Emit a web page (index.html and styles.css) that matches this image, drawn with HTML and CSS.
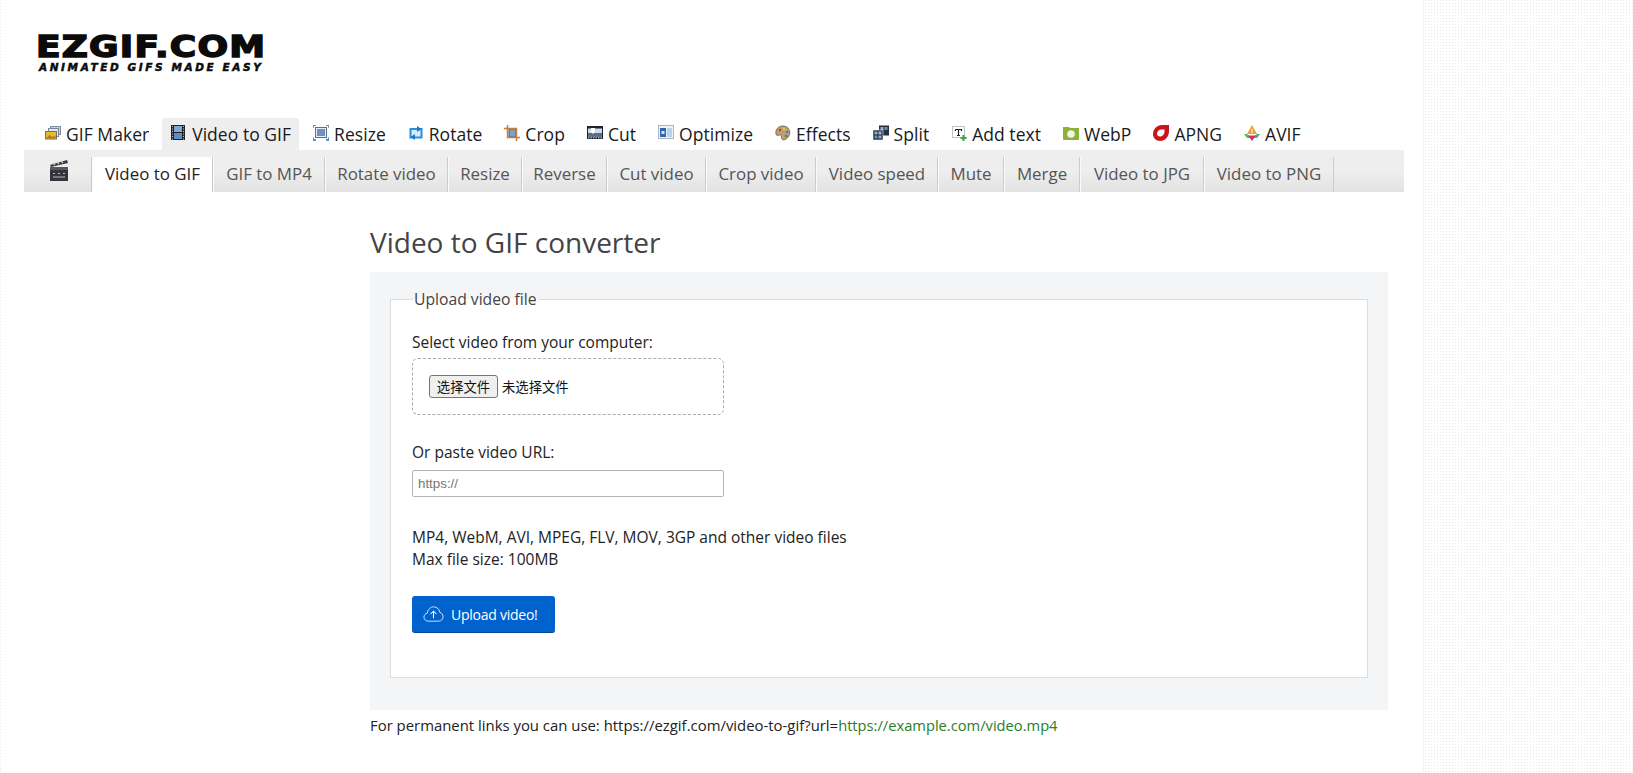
FILE: index.html
```html
<!DOCTYPE html>
<html lang="en">
<head>
<meta charset="utf-8">
<title>Video to GIF converter</title>
<link rel="stylesheet" href="styles.css">
</head>
<body>
<div class="page">
  <header class="logo">
    <div class="logo-main">EZGIF.COM</div>
    <div class="logo-tag">ANIMATED GIFS MADE EASY</div>
  </header>
  <nav class="topnav">
    <a class="top"><svg class="ic" viewBox="0 0 16 16"><rect x="5.500" y="1.500" width="10" height="8" fill="#b8d3ee" stroke="#7d8fa3"/><rect x="3.500" y="3.500" width="10" height="8" fill="#dfe9f3" stroke="#7d8791"/><rect x="0.500" y="6.500" width="11" height="7.500" fill="#e9bb34" stroke="#77735e"/><path d="M1 13l3.500-3 3 2 3-1.500V13.500H1z" fill="#b07e1c"/></svg>GIF Maker</a>
    <a class="top on"><svg class="ic" viewBox="0 0 16 16"><rect x="0" y="0" width="14" height="15" fill="#222"/><rect x="3" y="1" width="8" height="6" fill="#7da7d4"/><rect x="3" y="8" width="8" height="6" fill="#5b8ec6"/><path d="M1 1.500h1M1 4h1M1 6.500h1M1 9h1M1 11.500h1M1 14h1M12 1.500h1M12 4h1M12 6.500h1M12 9h1M12 11.500h1M12 14h1" stroke="#ccc" stroke-width="1.200"/></svg>Video to GIF</a>
    <a class="top"><svg class="ic" viewBox="0 0 16 16"><rect x="2.500" y="2.500" width="11" height="10" fill="#e8eef6" stroke="#5a6f92"/><rect x="4" y="4" width="8" height="7" fill="#6f93bd"/><path d="M0 3V0h3M13 0h3v3M16 12v3h-3M3 15H0v-3" fill="none" stroke="#2f6fd0" stroke-width="1.300"/></svg>Resize</a>
    <a class="top"><svg class="ic" viewBox="0 0 16 16"><rect x="2.500" y="4" width="11" height="8.500" fill="#d6ecfb" stroke="#2b8fd6" stroke-width="2"/><path d="M9 1l4.500 3L9 7zM7 15l-4.500-3L7 9z" fill="#1c78c4"/></svg>Rotate</a>
    <a class="top"><svg class="ic" viewBox="0 0 16 16"><rect x="5" y="4" width="7" height="8" fill="#7aa0cc" stroke="#3c5f8f"/><path d="M3.500 0v12.500H16M0 3.500h12.500V16" fill="none" stroke="#c8803a" stroke-width="1.500"/></svg>Crop</a>
    <a class="top"><svg class="ic" viewBox="0 0 16 16"><rect x="0" y="1" width="16" height="13" fill="#1e2230"/><rect x="1" y="3.500" width="14" height="8" fill="#cfdcea"/><rect x="1" y="8" width="14" height="3.500" fill="#5e6f85"/><path d="M4 3h4v3.500L6 9 4 6.500z" fill="#fff"/><path d="M1 12.800h14" stroke="#ddd" stroke-dasharray="1.500 1"/></svg>Cut</a>
    <a class="top"><svg class="ic" viewBox="0 0 16 16"><rect x="0.500" y="0.500" width="15" height="13" fill="#eef3f8" stroke="#aab6c4"/><rect x="2" y="3" width="6" height="9" fill="#2e66b0"/><rect x="9" y="3" width="5" height="9" fill="#b7d2ec"/><rect x="3.500" y="6" width="3" height="3" fill="#cfe3f5"/></svg>Optimize</a>
    <a class="top"><svg class="ic" viewBox="0 0 16 16"><path d="M8 1C4 1 0 4 1 9c.5 2 2 1.500 3 1 2-.7 2.500 1 2.500 2.500C6.500 15 9 15.500 11 14c3-2 5-6 3-9.500C13 2.500 10.500 1 8 1z" fill="#bfa273" stroke="#6b5636" stroke-width=".8"/><circle cx="5" cy="5" r="1.300" fill="#c0392b"/><circle cx="9" cy="4" r="1.300" fill="#e7c23b"/><circle cx="12" cy="7" r="1.300" fill="#3d7ab8"/><circle cx="11" cy="11" r="1.300" fill="#3d8f4a"/></svg>Effects</a>
    <a class="top"><svg class="ic" viewBox="0 0 16 16"><rect x="6" y="0.500" width="10" height="10" fill="#26303e"/><rect x="7.500" y="2" width="3" height="3" fill="#8fb0d4"/><rect x="11.500" y="2" width="3" height="3" fill="#6a90bb"/><rect x="0" y="5" width="10" height="10" fill="#1f2733" stroke="#fff" stroke-width=".6"/><rect x="1.500" y="6.500" width="3" height="3" fill="#8fb0d4"/><rect x="5.500" y="6.500" width="3" height="3" fill="#9dbadb"/><rect x="1.500" y="10.500" width="3" height="3" fill="#6a90bb"/><rect x="5.500" y="10.500" width="3" height="3" fill="#8fb0d4"/></svg>Split</a>
    <a class="top"><svg class="ic" viewBox="0 0 16 16"><rect x="1.500" y="1.500" width="12" height="11" fill="none" stroke="#7a84a8" stroke-dasharray="1 1"/><path d="M4.500 4.500h6v1.500M7.500 4.500v6M6 10.500h3M4.500 4.500V6" fill="none" stroke="#222" stroke-width="1.200"/><path d="M12.500 10v6M9.500 13h6" stroke="#3aa83a" stroke-width="2"/></svg>Add text</a>
    <a class="top"><svg class="ic" viewBox="0 0 16 16"><path d="M0 2h6l1 1h9v11a1 1 0 0 1-1 1H1a1 1 0 0 1-1-1z" fill="#8cb13c"/><circle cx="8" cy="9" r="3.800" fill="#f3f3e6"/></svg>WebP</a>
    <a class="top"><svg class="ic" viewBox="0 0 16 16"><path d="M16 0v6c0 6-4 10-9 10C3 16 0 13 0 9c0-5 4-9 9-9z" fill="#cc1518"/><path d="M11.500 4.500v2c0 2.500-2 5-4.500 5-2 0-3-1.200-3-2.800C4 6.500 6 4.500 8.500 4.500z" fill="#fff"/></svg>APNG</a>
    <a class="top"><svg class="ic" viewBox="0 0 16 16"><path d="M8 0l5 9H3z" fill="#f0a02c"/><path d="M3 9H0l3 4h5z" fill="#5fb25f"/><path d="M13 9h3l-3 4H8z" fill="#4fa86a"/><path d="M4 10.500h8L8 16z" fill="#c9336b"/><path d="M7.500 4l1-.5V8h-1z" fill="#fff"/></svg>AVIF</a>
  </nav>
  <nav class="subnav">
    <span class="sub-icon"><svg class="clap" viewBox="0 0 20 24"><path d="M1 7l17-5 1 3L2 9z" fill="#3a3a42"/><path d="M4 5l2 2M8 4l2 2M12 3l2 2" stroke="#ccc" stroke-width="1.300"/><rect x="1" y="9" width="18" height="14" fill="#33343c"/><rect x="1" y="9" width="18" height="3" fill="#55565e"/><path d="M4 15.500h2M9 15.500h2M14 15.500h2M4 19h12" stroke="#bbb"/></svg></span>
    <a class="sub active">Video to GIF</a>
    <a class="sub">GIF to MP4</a>
    <a class="sub">Rotate video</a>
    <a class="sub">Resize</a>
    <a class="sub">Reverse</a>
    <a class="sub">Cut video</a>
    <a class="sub">Crop video</a>
    <a class="sub">Video speed</a>
    <a class="sub">Mute</a>
    <a class="sub">Merge</a>
    <a class="sub">Video to JPG</a>
    <a class="sub">Video to PNG</a>
  </nav>
  <main class="main">
    <h1 class="title">Video to GIF converter</h1>
    <section class="panel">
      <fieldset class="box">
        <legend class="legend">Upload video file</legend>
        <label class="lbl">Select video from your computer:</label>
        <div class="drop">
          <button class="file-btn" type="button">选择文件</button><span class="file-none">未选择文件</span>
        </div>
        <label class="lbl lbl-url">Or paste video URL:</label>
        <input class="url" type="text" placeholder="https://">
        <p class="info">MP4, WebM, AVI, MPEG, FLV, MOV, 3GP and other video files<br>Max file size: 100MB</p>
        <button class="upload" type="button"><svg class="cloud" viewBox="0 0 22 18"><path d="M5.500 16.500C3 16.500 1 14.700 1 12.300c0-2.100 1.500-3.800 3.500-4.200C5 4.300 7.800 1.500 11.200 1.500c3.300 0 6 2.500 6.400 5.800 2 .5 3.400 2.300 3.400 4.500 0 2.600-2 4.700-4.500 4.700z" fill="none" stroke="#fff" stroke-opacity=".85"/><path d="M11 13.500V6.500M8 9l3-3 3 3" fill="none" stroke="#fff" stroke-width="1.100"/></svg>Upload video!</button>
      </fieldset>
    </section>
    <p class="perma">For permanent links you can use: https://ezgif.com/video-to-gif?url=<span class="green">https://example.com/video.mp4</span></p>
  </main>
</div>
</body>
</html>
```
FILE: styles.css
```css
* { box-sizing: border-box; }
html, body { height: 100%; }
body {
  margin: 0;
  background-color: #e9e9e9;
  background-image: linear-gradient(to right, transparent 1px, #fff 1px), linear-gradient(to bottom, transparent 1px, #fff 1px);
  background-size: 3px 3px;
  font-family: "Open Sans", "Noto Sans", sans-serif;
  color: #222;
  overflow: hidden;
}
.page {
  margin-left: 3px;
  width: 1421px;
  height: 773px;
  padding: 0 19px 0 21px;
  background: #fff;
  border-right: 1px solid #f4f4f4;
}
.logo { height: 118px; padding: 32px 0 0 12px; color: #0b0b0b; }
.logo-main {
  font: bold 30px/30px "DejaVu Sans", sans-serif;
  -webkit-text-stroke: 1.500px #0b0b0b;
  letter-spacing: 1px;
  width: 189px;
  white-space: nowrap;
  transform: scaleX(1.2);
  transform-origin: left center;
}
.logo-tag {
  font: italic bold 10.500px/12px "DejaVu Sans", sans-serif;
  -webkit-text-stroke: .5px #0b0b0b;
  letter-spacing: 2.600px;
  margin: -1px 0 0 3px;
  white-space: nowrap;
}
.topnav { display: flex; height: 32px; padding-left: 12px; gap: 5px; }
.top {
  display: flex;
  align-items: center;
  gap: 5px;
  height: 32px;
  padding: 0 8px 0 9px;
  font-size: 17.500px;
  letter-spacing: .04px;
  color: #1a1a1a;
  border-radius: 3px 3px 0 0;
  white-space: nowrap;
}
.top.on { background: #eee; }
.ic { width: 16px; height: 16px; flex: none; margin-top: -3px; }
.subnav {
  display: flex;
  height: 42px;
  padding-top: 7px;
  background: linear-gradient(#eeeeee, #eeeeee 50%, #e2e2e2);
}
.sub-icon {
  width: 68px;
  height: 35px;
  display: flex;
  justify-content: center;
  padding-left: 3px;
  border-right: 1px solid #ccc;
  flex: none;
}
.clap { width: 20px; height: 24px; margin-top: 1px; }
.sub {
  display: flex;
  align-items: center;
  justify-content: center;
  flex: none;
  height: 35px;
  padding-bottom: 2px;
  font-size: 16.900px;
  color: #555;
  border-right: 1px solid #ccc;
  border-left: 1px solid #fafafa;
  white-space: nowrap;
}
.sub:nth-child(2) { width: 121px; }
.sub:nth-child(3) { width: 112px; }
.sub:nth-child(4) { width: 123px; }
.sub:nth-child(5) { width: 74px; }
.sub:nth-child(6) { width: 85px; }
.sub:nth-child(7) { width: 99px; }
.sub:nth-child(8) { width: 110px; }
.sub:nth-child(9) { width: 122px; }
.sub:nth-child(10) { width: 66px; }
.sub:nth-child(11) { width: 76px; }
.sub:nth-child(12) { width: 124px; }
.sub:nth-child(13) { width: 130px; }
.sub.active { background: #fff; color: #222; }
.main { margin-left: 346px; width: 1018px; }
.title {
  margin: 0;
  height: 80px;
  padding-top: 30px;
  font-size: 28px;
  line-height: 40px;
  font-weight: 400;
  color: #444;
}
.panel { background: #f4f5f7; height: 438px; padding: 27px 20px 0; }
.box {
  margin: 0;
  height: 379px;
  padding: 22px 20px 0 21px;
  background: #fff;
  border: 1px solid #ddd;
  min-width: 0;
  position: relative;
}
.legend {
  padding: 0 1px;
  margin-left: 1px;
  font-size: 15.700px;
  line-height: 22px;
  color: #444;
  position: absolute;
  top: -12px;
  background: linear-gradient(#f4f5f7 11px, #fff 11px);
}
.lbl { display: block; font-size: 15.500px; line-height: 22px; color: #222; margin-top: 9px; }
.drop {
  display: flex;
  align-items: center;
  width: 312px;
  height: 57px;
  margin-top: 5px;
  padding-left: 16px;
  border: 1px dashed #aaa;
  border-radius: 6px;
}
.file-btn {
  height: 23px;
  width: 69px;
  padding: 0;
  font: 13.330px "Noto Sans CJK SC", sans-serif;
  color: #111;
  background: #efefef;
  border: 1px solid #767676;
  border-radius: 3px;
}
.file-none { margin-left: 4px; font: 13.330px "Noto Sans CJK SC", sans-serif; color: #111; }
.lbl-url { margin-top: 26px; }
.url {
  display: block;
  width: 312px;
  height: 27px;
  margin-top: 7px;
  padding: 0 5px;
  font: 13.330px "Liberation Sans", sans-serif;
  border: 1px solid #b5b5b5;
  border-radius: 2px;
}
.url::placeholder { color: #757575; }
.info { margin: 29px 0 0; font-size: 15.500px; line-height: 22px; color: #222; }
.upload {
  display: flex;
  align-items: center;
  gap: 7px;
  width: 143px;
  height: 37px;
  margin-top: 26px;
  padding: 0 0 0 11px;
  font-family: "Open Sans", sans-serif;
  font-size: 14px;
  letter-spacing: -.25px;
  color: #fff;
  background: #0062cc;
  border: 0;
  border-bottom: 1px solid #004a9e;
  border-radius: 3px;
}
.cloud { width: 21px; height: 18px; flex: none; }
.perma { margin: 4px 0 0; font-size: 14.900px; line-height: 22px; color: #222; }
.green { color: #2a7d2a; font-size: 14.700px; }
```
